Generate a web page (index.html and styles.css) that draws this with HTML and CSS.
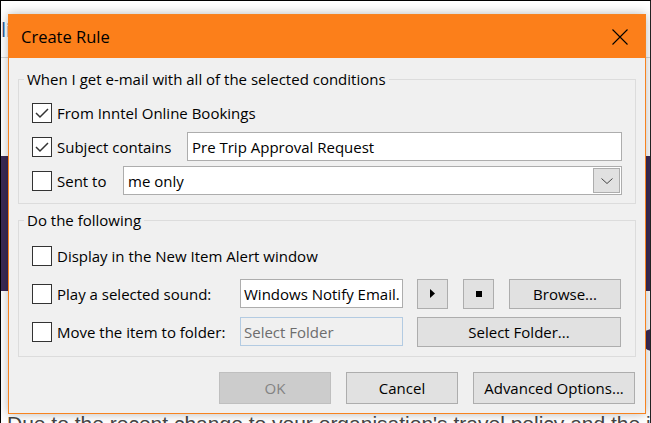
FILE: index.html
```html
<!DOCTYPE html>
<html lang="en">

<head>
    <meta charset="UTF-8">
    <meta name="viewport" content="width=device-width, initial-scale=1.0">
    <title>Create Rule</title>
    <link rel="stylesheet" href="styles.css">
</head>

<body>
    <div class="page">
        <header class="site-head">
            <span class="site-link">li</span>
        </header>
        <div class="band"></div>
        <p class="intro">Due to the recent change to your organisation's travel policy and the information</p>
        <span class="blob"></span>

        <!-- Create Rule dialog -->
        <div class="dialog">
            <div class="title-bar">
                <span class="title">Create Rule</span>
                <svg class="close" width="16" height="16" viewBox="0 0 16 16">
                    <path d="M0.5 0.5 L15.5 15.5 M15.5 0.5 L0.5 15.5" stroke="#000" stroke-width="1.1" fill="none" />
                </svg>
            </div>

            <div class="dialog-body">
                <fieldset class="group">
                    <legend>When I get e-mail with all of the selected conditions</legend>
                    <div class="rows rows-tight">
                        <div class="row">
                            <label class="check">
                                <span class="box"><svg width="18" height="18" viewBox="0 0 18 18"><polyline points="3,9 7,13 15,5" /></svg></span>
                                From Inntel Online Bookings
                            </label>
                        </div>
                        <div class="row">
                            <label class="check w-subject">
                                <span class="box"><svg width="18" height="18" viewBox="0 0 18 18"><polyline points="3,9 7,13 15,5" /></svg></span>
                                Subject contains
                            </label>
                            <div class="field grow">Pre Trip Approval Request</div>
                        </div>
                        <div class="row">
                            <label class="check w-sent">
                                <span class="box"></span>
                                Sent to
                            </label>
                            <div class="field grow select">
                                <span>me only</span>
                                <span class="drop"><svg width="12" height="6" viewBox="0 0 12 6"><polyline points="0.5,0.5 6,5.5 11.5,0.5" /></svg></span>
                            </div>
                        </div>
                    </div>
                </fieldset>

                <fieldset class="group group-second">
                    <legend>Do the following</legend>
                    <div class="rows rows-wide">
                        <div class="row">
                            <label class="check">
                                <span class="box"></span>
                                Display in the New Item Alert window
                            </label>
                        </div>
                        <div class="row">
                            <label class="check w-action">
                                <span class="box"></span>
                                Play a selected sound:
                            </label>
                            <div class="field short">Windows Notify Email.</div>
                            <button class="btn icon-btn"><svg width="5" height="9" viewBox="0 0 5 9"><polygon points="0,0 5,4.5 0,9" fill="#000" /></svg></button>
                            <button class="btn icon-btn"><span class="stop"></span></button>
                            <button class="btn browse">Browse...</button>
                        </div>
                        <div class="row">
                            <label class="check w-action">
                                <span class="box"></span>
                                Move the item to folder:
                            </label>
                            <div class="field short disabled">Select Folder</div>
                            <button class="btn folder">Select Folder...</button>
                        </div>
                    </div>
                </fieldset>

                <div class="footer">
                    <button class="btn small disabled-btn">OK</button>
                    <button class="btn small">Cancel</button>
                    <button class="btn wide">Advanced Options...</button>
                </div>
            </div>
        </div>
    </div>
</body>

</html>
```

FILE: styles.css
```css
body {
    margin: 0;
    padding: 0;
    background-color: #fff;
}

.page {
    position: relative;
    height: 423px;
    overflow: hidden;
    border-top: 1px solid #000;
    border-left: 1px solid #000;
    border-right: 1px solid #222;
    box-sizing: border-box;
}

/* page behind the dialog */
.site-head {
    height: 56px;
    border-bottom: 1px solid #d6d6d6;
}

.site-link {
    display: inline-block;
    margin-top: 15px;
    font-family: "Open Sans", sans-serif;
    font-size: 20px;
    color: #2b5797;
}

.band {
    margin-top: 98px;
    height: 135px;
    background-color: #3b2a55;
}

.intro {
    margin: 121px 0 0 6px;
    font-family: "Liberation Sans", Arial, sans-serif;
    font-size: 21px;
    line-height: 24px;
    color: #444;
    white-space: nowrap;
}

.blob {
    position: absolute;
    right: -12px;
    top: 328px;
    width: 20px;
    height: 22px;
    border-radius: 50%;
    background-color: #3b2a55;
}

/* dialog */
.dialog {
    position: absolute;
    left: 7px;
    top: 13px;
    width: 638px;
    box-sizing: border-box;
    background-color: #f0f0f0;
    border: 1px solid #f7831f;
    box-shadow: 0 0 10px rgba(0, 0, 0, 0.28);
    font-family: "Open Sans", sans-serif;
    font-size: 15px;
    color: #000;
}

.title-bar {
    height: 43px;
    background-color: #fc7f1a;
    display: flex;
    align-items: center;
    justify-content: space-between;
    padding: 0 17px 0 12px;
}

.title {
    font-size: 16.5px;
}

.close {
    display: block;
}

.dialog-body {
    padding: 11px 9px 9px;
}

.group {
    margin: 0;
    padding: 0;
    min-width: 0;
    border: 1px solid #dcdcdc;
}

.group legend {
    margin-left: 5px;
    padding: 0 3px;
    line-height: 20px;
    font-size: 15px;
}

.group-second {
    margin-top: 6px;
}

.rows {
    display: flex;
    flex-direction: column;
}

.rows-tight {
    gap: 5px;
    padding: 9px 13px 8px;
}

.rows-wide {
    gap: 9px;
    padding: 11px 13px 10px;
}

.row {
    display: flex;
    align-items: center;
    height: 29px;
}

.check {
    display: flex;
    align-items: center;
    gap: 5px;
    white-space: nowrap;
}

.w-subject {
    flex: 0 0 155px;
}

.w-sent {
    flex: 0 0 91px;
}

.w-action {
    flex: 0 0 208px;
}

.box {
    width: 18px;
    height: 18px;
    border: 1px solid #333;
    background-color: #fff;
    display: flex;
}

.box polyline {
    fill: none;
    stroke: #333;
    stroke-width: 1.5;
}

.field {
    height: 29px;
    box-sizing: border-box;
    border: 1px solid #adadad;
    background-color: #fff;
    padding-left: 4px;
    display: flex;
    align-items: center;
    white-space: nowrap;
    overflow: hidden;
}

.grow {
    flex: 1;
}

.select {
    justify-content: space-between;
}

.drop {
    width: 27px;
    height: 25px;
    margin-right: 1px;
    box-sizing: border-box;
    border: 1px solid #adadad;
    background-color: #e1e1e1;
    display: flex;
    align-items: center;
    justify-content: center;
}

.drop polyline {
    fill: none;
    stroke: #444;
    stroke-width: 1;
}

.short {
    width: 163px;
    margin-right: 14px;
    padding-left: 3px;
}

.field.disabled {
    background-color: #f0f0f0;
    border-color: #b3cbe2;
    color: #6d6d6d;
}

.btn {
    height: 30px;
    box-sizing: border-box;
    border: 1px solid #adadad;
    background-color: #e1e1e1;
    font-family: inherit;
    font-size: 15px;
    color: #000;
    padding: 0;
}

.icon-btn {
    width: 31px;
    margin-right: 15px;
    display: flex;
    align-items: center;
    justify-content: center;
}

.stop {
    width: 6px;
    height: 6px;
    background-color: #000;
}

.browse {
    width: 112px;
}

.folder {
    width: 204px;
}

.footer {
    display: flex;
    justify-content: flex-end;
    gap: 15px;
    margin-top: 15px;
    padding-right: 1px;
}

.footer .btn {
    height: 32px;
}

.small {
    width: 112px;
}

.wide {
    width: 162px;
}

.disabled-btn {
    background-color: #cccccc;
    border-color: #bfbfbf;
    color: #838383;
}
```
